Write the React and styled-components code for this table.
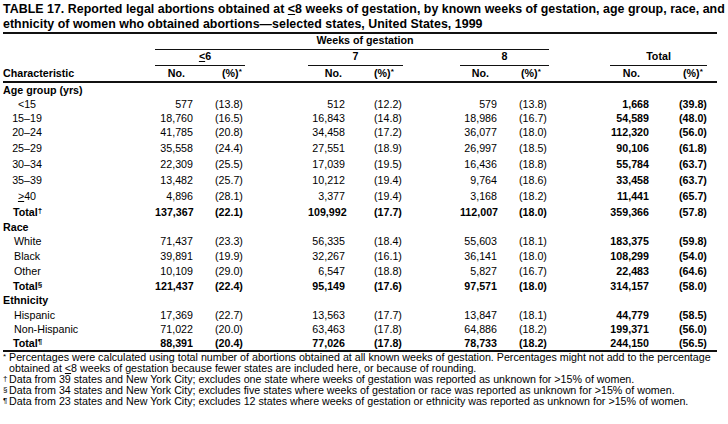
import React from "react";
import styled, { createGlobalStyle } from "styled-components";

const Global = createGlobalStyle`
  html, body { margin: 0; padding: 0; background: #fff; }
  body { font-family: "Liberation Sans", Arial, Helvetica, sans-serif; color: #000; }
`;

const COLS =
  "152px 38px 22px 30px 63px 37px 29px 29px 57px 37px 22px 30px 61px 39px 30px 28px 10px";

const GROUPS = [
  { n: 2, p: 4, noPad: 8, pctPad: 7, label: "le6" },
  { n: 6, p: 8, noPad: 3, pctPad: 0, label: "7" },
  { n: 10, p: 12, noPad: 8, pctPad: 2, label: "8" },
  { n: 14, p: 16, noPad: 9, pctPad: 4, label: "Total" },
];

const Page = styled.div`
  width: 728px;
  height: 424px;
  overflow: hidden;
  padding-left: 3px;
  box-sizing: border-box;
`;

const Title = styled.h1`
  margin: 0;
  padding-top: 2px;
  width: 714px;
  font-size: 12.4px;
  letter-spacing: 0.03px;
  line-height: 15px;
  font-weight: 700;
  white-space: nowrap;
  border-bottom: 2px solid #111;
`;

const U = styled.span`
  text-decoration: underline;
  text-underline-offset: 1px;
  text-decoration-thickness: 1px;
`;

const Sup = styled.sup`
  font-size: 8px;
  line-height: 0;
  vertical-align: 3px;
`;

const Header = styled.div`
  display: grid;
  grid-template-columns: ${COLS};
  grid-template-rows: 16px 16px 15px;
  width: 714px;
  font-size: 10.7px;
  font-weight: 700;
  line-height: 13px;
  border-bottom: 2px solid #111;
`;

const Spanner = styled.div`
  grid-row: ${(p) => p.$row};
  grid-column: ${(p) => p.$from} / ${(p) => p.$to};
  border-bottom: 1px solid #111;
  display: flex;
  align-items: flex-end;
  justify-content: center;
  padding-bottom: 2px;
  padding-left: ${(p) => p.$shift || 0}px;
  white-space: nowrap;
`;

const ColHead = styled.div`
  grid-row: 3;
  grid-column: ${(p) => p.$col};
  align-self: center;
  white-space: nowrap;
  text-align: ${(p) => (p.$right ? "right" : "left")};
  padding-right: ${(p) => p.$padR || 0}px;
  padding-left: ${(p) => p.$padL || 0}px;
`;

const Body = styled.div`
  width: 714px;
  font-size: 10.7px;
  line-height: 13px;
  border-bottom: 2px solid #111;
`;

const Row = styled.div`
  display: grid;
  grid-template-columns: ${COLS};
  height: ${(p) => p.$h}px;
  align-items: center;
  font-weight: ${(p) => (p.$bold ? 700 : 400)};
`;

const Label = styled.div`
  grid-column: 1;
  padding-left: ${(p) => p.$indent}px;
  white-space: nowrap;
`;

const AgeBox = styled.span`
  display: inline-block;
  width: 36px;
  text-align: center;
`;

const Num = styled.div`
  grid-column: ${(p) => p.$col};
  text-align: right;
  white-space: nowrap;
  font-weight: ${(p) => (p.$bold ? 700 : "inherit")};
`;

const Pct = styled.div`
  grid-column: ${(p) => p.$col} / span 2;
  text-align: left;
  white-space: nowrap;
  font-weight: ${(p) => (p.$bold ? 700 : "inherit")};
`;

const Notes = styled.div`
  font-size: 10.7px;
  line-height: 11px;
  white-space: nowrap;
`;

const Note = styled.div`
  display: grid;
  grid-template-columns: 6px auto;
`;

const Mark = styled.span`
  font-size: 8px;
  line-height: 8px;
  padding-top: ${(p) => p.$top || 0}px;
`;

const Le = () => <U>&lt;</U>;
const Ge = () => <U>&gt;</U>;

const ROWS = [
  { kind: "group", label: "Age group (yrs)", h: 14 },
  { kind: "age", label: "<15", h: 14, v: ["577", "(13.8)", "512", "(12.2)", "579", "(13.8)", "1,668", "(39.8)"] },
  { kind: "age", label: "15–19", h: 14, v: ["18,760", "(16.5)", "16,843", "(14.8)", "18,986", "(16.7)", "54,589", "(48.0)"] },
  { kind: "age", label: "20–24", h: 15, v: ["41,785", "(20.8)", "34,458", "(17.2)", "36,077", "(18.0)", "112,320", "(56.0)"] },
  { kind: "age", label: "25–29", h: 16, v: ["35,558", "(24.4)", "27,551", "(18.9)", "26,997", "(18.5)", "90,106", "(61.8)"] },
  { kind: "age", label: "30–34", h: 16, v: ["22,309", "(25.5)", "17,039", "(19.5)", "16,436", "(18.8)", "55,784", "(63.7)"] },
  { kind: "age", label: "35–39", h: 16, v: ["13,482", "(25.7)", "10,212", "(19.4)", "9,764", "(18.6)", "33,458", "(63.7)"] },
  { kind: "age", label: <><Ge />40</>, h: 16, v: ["4,896", "(28.1)", "3,377", "(19.4)", "3,168", "(18.2)", "11,441", "(65.7)"] },
  { kind: "total", mark: "†", h: 16, totalBold: false, v: ["137,367", "(22.1)", "109,992", "(17.7)", "112,007", "(18.0)", "359,366", "(57.8)"] },
  { kind: "group", label: "Race", h: 14 },
  { kind: "item", label: "White", h: 15, v: ["71,437", "(23.3)", "56,335", "(18.4)", "55,603", "(18.1)", "183,375", "(59.8)"] },
  { kind: "item", label: "Black", h: 15, v: ["39,891", "(19.9)", "32,267", "(16.1)", "36,141", "(18.0)", "108,299", "(54.0)"] },
  { kind: "item", label: "Other", h: 15, v: ["10,109", "(29.0)", "6,547", "(18.8)", "5,827", "(16.7)", "22,483", "(64.6)"] },
  { kind: "total", mark: "§", h: 14, totalBold: false, v: ["121,437", "(22.4)", "95,149", "(17.6)", "97,571", "(18.0)", "314,157", "(58.0)"] },
  { kind: "group", label: "Ethnicity", h: 15 },
  { kind: "item", label: "Hispanic", h: 15, v: ["17,369", "(22.7)", "13,563", "(17.7)", "13,847", "(18.1)", "44,779", "(58.5)"] },
  { kind: "item", label: "Non-Hispanic", h: 13, v: ["71,022", "(20.0)", "63,463", "(17.8)", "64,886", "(18.2)", "199,371", "(56.0)"] },
  { kind: "total", mark: "¶", h: 14, totalBold: true, v: ["88,391", "(20.4)", "77,026", "(17.8)", "78,733", "(18.2)", "244,150", "(56.5)"] },
];

function DataRow({ row }) {
  const isTotal = row.kind === "total";
  let label;
  if (row.kind === "group") label = <Label $indent={0}>{row.label}</Label>;
  else if (row.kind === "age")
    label = (
      <Label $indent={6}>
        <AgeBox>{row.label}</AgeBox>
      </Label>
    );
  else if (isTotal)
    label = (
      <Label $indent={10}>
        Total<Sup>{row.mark}</Sup>
      </Label>
    );
  else label = <Label $indent={11}>{row.label}</Label>;

  return (
    <Row $h={row.h} $bold={row.kind === "group" || isTotal}>
      {label}
      {row.v &&
        GROUPS.map((g, i) => {
          const last = i === GROUPS.length - 1;
          const bold = last ? (isTotal ? row.totalBold : true) : isTotal;
          return (
            <React.Fragment key={g.n}>
              <Num $col={g.n} $bold={bold}>{row.v[i * 2]}</Num>
              <Pct $col={g.p} $bold={bold}>{row.v[i * 2 + 1]}</Pct>
            </React.Fragment>
          );
        })}
    </Row>
  );
}

export default function App() {
  return (
    <Page>
      <Global />
      <Title>
        TABLE 17. Reported legal abortions obtained at <Le />8 weeks of gestation, by known weeks of gestation, age group, race, and
        <br />
        ethnicity of women who obtained abortions—selected states, United States, 1999
      </Title>
      <Header>
        <Spanner $row={1} $from={2} $to={13} $shift={26}>
          Weeks of gestation
        </Spanner>
        {GROUPS.map((g) => (
          <Spanner key={g.n} $row={2} $from={g.n} $to={g.p + 1} $shift={g.label === "le6" ? 10 : 0}>
            {g.label === "le6" ? (
              <>
                <Le />6
              </>
            ) : (
              g.label
            )}
          </Spanner>
        ))}
        <ColHead $col={1}>Characteristic</ColHead>
        {GROUPS.map((g) => (
          <React.Fragment key={g.n}>
            <ColHead $col={g.n} $right $padR={g.noPad}>
              No.
            </ColHead>
            <ColHead $col={`${g.p} / span 2`} $padL={g.pctPad}>
              (%)<Sup>*</Sup>
            </ColHead>
          </React.Fragment>
        ))}
      </Header>
      <Body>
        {ROWS.map((r, i) => (
          <DataRow key={i} row={r} />
        ))}
      </Body>
      <Notes>
        <Note>
          <Mark $top={1}>*</Mark>
          <span>
            Percentages were calculated using total number of abortions obtained at all known weeks of gestation. Percentages might not add to the percentage
            <br />
            obtained at <Le />8 weeks of gestation because fewer states are included here, or because of rounding.
          </span>
        </Note>
        <Note>
          <Mark $top={1}>†</Mark>
          <span>Data from 39 states and New York City; excludes one state where weeks of gestation was reported as unknown for &gt;15% of women.</span>
        </Note>
        <Note>
          <Mark $top={1}>§</Mark>
          <span>Data from 34 states and New York City; excludes five states where weeks of gestation or race was reported as unknown for &gt;15% of women.</span>
        </Note>
        <Note>
          <Mark $top={1}>¶</Mark>
          <span>Data from 23 states and New York City; excludes 12 states where weeks of gestation or ethnicity was reported as unknown for &gt;15% of women.</span>
        </Note>
      </Notes>
    </Page>
  );
}
